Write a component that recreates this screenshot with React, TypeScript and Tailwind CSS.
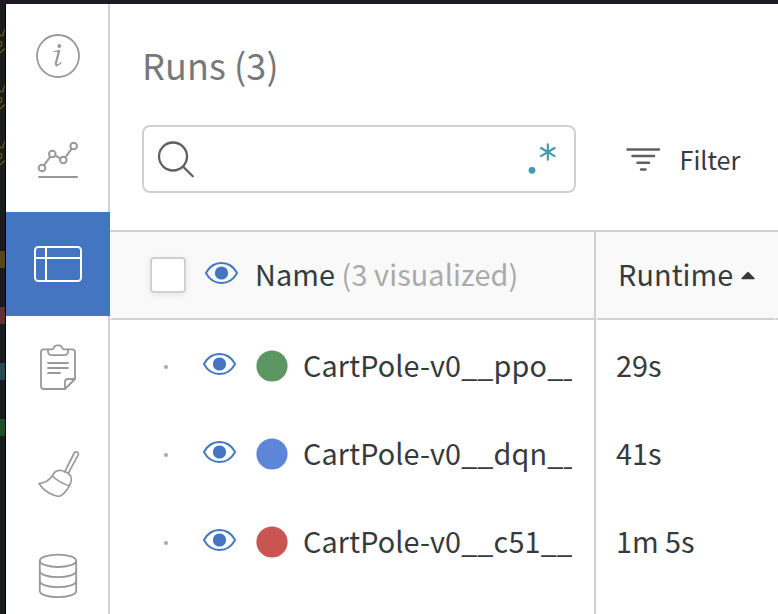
import type { ReactNode } from "react";

const outline = {
  width: 48,
  height: 48,
  viewBox: "0 0 48 48",
  fill: "none",
  stroke: "currentColor",
  strokeWidth: 2,
  strokeLinecap: "round" as const,
  strokeLinejoin: "round" as const,
};

const InfoIcon = () => (
  <svg {...outline} strokeWidth={1.8}>
    <circle cx="24" cy="24" r="21" />
    <circle cx="25.3" cy="14" r="1.9" fill="currentColor" stroke="none" />
    <path d="M20.2 19.7L25.6 18.6" strokeWidth="1.2" />
    <path d="M25 19.2L22 30.6C21.6 32.6 22 33.3 23 33.3" strokeWidth="2.2" />
    <path d="M22.6 33.4C24.5 33.4 26 32 27 30.4" strokeWidth="1.1" />
  </svg>
);

const ChartIcon = () => (
  <svg {...outline}>
    <circle cx="8" cy="32" r="3.3" />
    <circle cx="18.3" cy="18" r="3.3" />
    <circle cx="29.3" cy="24" r="3.3" />
    <circle cx="39.7" cy="10" r="3.3" />
    <path d="M10 29.3L16.3 20.7M21.3 19.6L26.3 22.4M31.4 21.3L37.7 12.7" />
    <path d="M5 41H43" />
  </svg>
);

const TableIcon = () => (
  <svg {...outline}>
    <rect x="1" y="7" width="46" height="34" rx="3.5" />
    <path d="M1 18H47M12 7V41" />
  </svg>
);

const ClipboardIcon = () => (
  <svg {...outline} strokeWidth={1.8}>
    <path d="M14 5.3H9.5A2.7 2.7 0 0 0 7 8V42.3A2.7 2.7 0 0 0 9.7 45H31L41 35V8A2.7 2.7 0 0 0 38.3 5.3H34" />
    <path d="M18 5.3C19.6 5.3 19.4 4.6 19.8 3.6C20.4 2 21.5 1.3 23 1.3H25C26.5 1.3 27.6 2 28.2 3.6C28.6 4.6 28.4 5.3 30 5.3H34V7.5A3.6 3.6 0 0 1 30.4 11.1H17.6A3.6 3.6 0 0 1 14 7.5V5.3Z" />
    <path d="M31 45V38A3 3 0 0 1 34 35H41" />
    <path d="M14 19H34M14 24H34M14 29H26" />
  </svg>
);

const BroomIcon = () => (
  <svg {...outline} strokeWidth={1.7} className="overflow-visible">
    <path d="M30.6 24.2L40.2 5C41.4 2.7 45.3 4.2 44.2 6.8L34.2 25.4" />
    <path d="M18.3 28C20 24 23.5 21.8 27.3 22.5C29.5 22.9 32.5 23.9 34.5 25.5C38 28.6 38 33.6 35.3 37.8C32.6 42.8 30 45.8 26.5 47.8C25 48.6 22.6 48.3 20 47.3C13.5 44.8 8.5 41 5 35.5C10.5 35 15 32.5 18.3 28Z" />
    <path d="M18.3 28C23.5 32.8 29 36 35.3 37.8" />
  </svg>
);

const DatabaseIcon = () => (
  <svg {...outline} strokeWidth={1.8}>
    <ellipse cx="24" cy="8.8" rx="18.2" ry="6.2" />
    <path d="M5.8 8.8V39C5.8 42.4 14 45.2 24 45.2S42.2 42.4 42.2 39V8.8" />
    <path d="M5.8 19C5.8 22.4 14 25.2 24 25.2S42.2 22.4 42.2 19M5.8 29C5.8 32.4 14 35.2 24 35.2S42.2 32.4 42.2 29" />
  </svg>
);

const EyeIcon = () => (
  <svg width="34" height="24" viewBox="-0.5 0 34 24" fill="none" className="block shrink-0 overflow-visible text-[#4375c1]">
    <path
      d="M1.4 12C5 5.4 10.6 2 17 2S29 5.4 32.6 12C29 18.6 23.4 22 17 22S5 18.6 1.4 12Z"
      stroke="currentColor"
      strokeWidth="1.9"
      strokeLinejoin="round"
    />
    <circle cx="17" cy="12" r="6.6" fill="currentColor" />
  </svg>
);

const NavItem = ({ active = false, children }: { active?: boolean; children: ReactNode }) => (
  <div
    className={
      active
        ? "flex h-[104px] w-[104px] shrink-0 items-center justify-center bg-[#4375c1] text-white"
        : "flex h-[104px] w-[104px] shrink-0 items-center justify-center border-r-2 border-[#d3d3d3] pl-0.5 text-[#999]"
    }
  >
    {children}
  </div>
);

const runs = [
  { name: "CartPole-v0__ppo__", dot: "fill-[#5c9763]", runtime: "29s" },
  { name: "CartPole-v0__dqn__", dot: "fill-[#5e86d8]", runtime: "41s" },
  { name: "CartPole-v0__c51__", dot: "fill-[#c85551]", runtime: "1m 5s" },
];

const BackdropEdge = () => (
  <div className="w-1.5 shrink-0 overflow-hidden border-r border-black bg-[#1b1c1e]">
    <svg width="5" height="247" viewBox="0 0 5 247" fill="none" stroke="#5c5415" strokeWidth="1.5" className="block">
      {[0, 56, 112].map((y) => (
        <path key={y} d="M0 31.5L3 31.5L5 25M0 38C3 37 2 41 0 43M0 49L5 44.5" transform={`translate(0 ${y})`} />
      ))}
    </svg>
    <div className="mb-[39px] h-[17px] bg-[#574420]" />
    <div className="mb-[39px] h-[17px] bg-[#613033]" />
    <div className="mb-[39px] h-[17px] bg-[#264b50]" />
    <div className="h-[17px] bg-[#205029]" />
  </div>
);

export default function App() {
  return (
    <div className="flex h-[614px] w-[778px] flex-col overflow-hidden bg-white font-['Noto_Sans_CJK_SC',sans-serif] text-[#363a3d]">
      <div className="h-1 shrink-0 bg-[#1d1b21]" />
      <div className="flex min-h-0 flex-1">
        <BackdropEdge />
        <nav className="flex w-[104px] shrink-0 flex-col overflow-hidden">
          <NavItem><InfoIcon /></NavItem>
          <NavItem><ChartIcon /></NavItem>
          <NavItem active><TableIcon /></NavItem>
          <NavItem><ClipboardIcon /></NavItem>
          <NavItem><BroomIcon /></NavItem>
          <NavItem><DatabaseIcon /></NavItem>
        </nav>
        <main className="flex min-w-0 flex-1 flex-col">
          <h1 className="mt-9 ml-8 h-[48px] text-[36px] leading-[48px] tracking-[0.1px] whitespace-nowrap text-[#77787b]">
            Runs (3)
          </h1>
          <div className="mt-[37px] ml-8 flex h-[68px] shrink-0 items-center">
            <div className="flex h-[68px] w-[434px] items-center justify-between rounded-lg border-2 border-[#d0d0d0] pr-[17px] pl-3.5">
              <svg width="38" height="38" viewBox="0 0 38 38" fill="none" stroke="#5f6064" strokeWidth="2.3" strokeLinecap="round">
                <circle cx="15" cy="16.5" r="14" />
                <path d="M25.2 26.8L34.8 36.2" />
              </svg>
              <svg width="30" height="34" viewBox="0 0 30 34" fill="none" stroke="#409aab" strokeWidth="2.1" strokeLinecap="round">
                <circle cx="5" cy="28.3" r="3.4" fill="#409aab" stroke="none" />
                <path d="M20.8 2.4V17.8M14 6L27.6 14.2M27.6 6L14 14.2" />
              </svg>
            </div>
            <svg width="36" height="24" viewBox="0 0 36 24" stroke="#5f6064" strokeWidth="2.5" strokeLinecap="round" className="ml-[49px]">
              <path d="M2.5 2.4H34M7.5 9H29M12.5 15.7H24M16 22.4H20.5" />
            </svg>
            <span className="ml-[18.5px] text-[25.2px] leading-9">Filter</span>
          </div>
          <div className="mt-[37px] flex h-[90px] shrink-0 border-t-2 border-[#d0d0d0] bg-[#f9f9f9]">
            <div className="flex w-[484px] shrink-0 items-center border-b-2 border-l-2 border-b-[#d0d0d0] border-l-[#f9f9f9] pl-[38px]">
              <div className="h-9 w-9 shrink-0 rounded border-2 border-[#d0d0d0] bg-white shadow-[0_2px_6px_rgba(0,0,0,0.08)]" />
              <div className="-mt-1 ml-[18px]"><EyeIcon /></div>
              <div className="-mt-0.5 ml-[17px] text-[28.8px] leading-10 tracking-[0.1px] whitespace-nowrap">
                Name <span className="text-[#a9aaab]">(3 visualized)</span>
              </div>
            </div>
            <div className="w-0.5 shrink-0 bg-[#d0d0d0]" />
            <div className="flex w-[178px] shrink-0 items-center border-b-2 border-l-2 border-b-[#d0d0d0] border-l-[#f9f9f9] pl-5">
              <span className="-mt-0.5 text-[28.8px] leading-10 tracking-[0.1px]">Runtime</span>
              <svg width="16" height="9" viewBox="0 0 16 9" className="ml-[6.5px]">
                <path d="M2 7.5L8 1.6L14 7.5Z" fill="#363a3d" stroke="#363a3d" strokeWidth="1.4" strokeLinejoin="round" />
              </svg>
            </div>
            <div className="flex-1 border-b-2 border-l-2 border-b-[#d0d0d0] border-l-[#f9f9f9]" />
          </div>
          <div className="flex min-h-0 flex-1">
            <div className="w-[486px] shrink-0 border-r-2 border-[#d0d0d0] pt-0.5">
              {runs.map((run) => (
                <div key={run.name} className="flex h-[88px] items-center pl-[54px]">
                  <div className="mt-0.5 h-1 w-1 shrink-0 rounded-full bg-[#a9a9a9]" />
                  <div className="-mt-1 ml-[34px]"><EyeIcon /></div>
                  <svg width="32" height="32" viewBox="0 0 32 32" className={`ml-5 shrink-0 ${run.dot}`}>
                    <circle cx="16" cy="16" r="15.6" />
                  </svg>
                  <div className="-mt-0.5 ml-[15px] w-[269px] overflow-hidden text-[28.8px] leading-10 tracking-[0.13px] whitespace-nowrap">
                    {run.name}
                  </div>
                </div>
              ))}
            </div>
            <div className="pt-px pl-5">
              {runs.map((run) => (
                <div key={run.name} className="flex h-[88px] items-center text-[28.8px] leading-[42px]">
                  {run.runtime}
                </div>
              ))}
            </div>
          </div>
        </main>
      </div>
    </div>
  );
}
